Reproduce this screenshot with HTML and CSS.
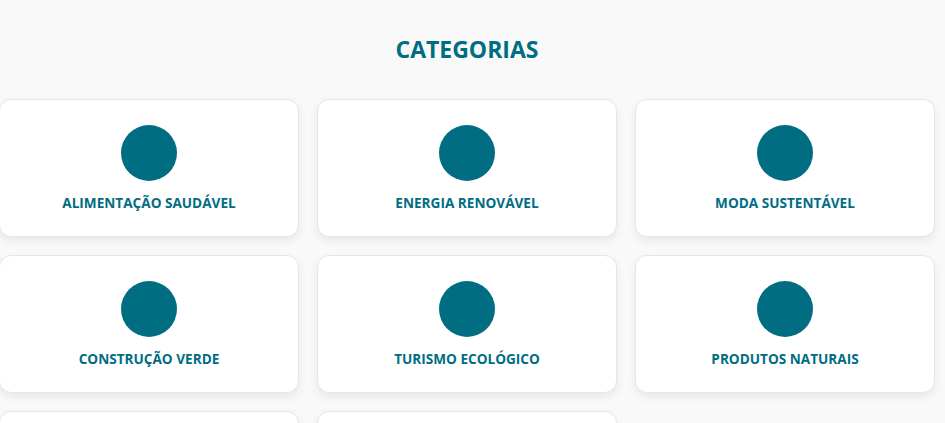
FILE: index.html
```html
<!DOCTYPE html>
<html lang="pt">
<head>
<meta charset="utf-8">
<title>Categorias</title>
<link rel="stylesheet" href="styles.css">
</head>
<body>
<section class="categories">
  <h2 class="categories-title">CATEGORIAS</h2>
  <div class="categories-grid">
    <a class="category-card" href="#"><span class="category-icon"></span><span class="category-name">ALIMENTAÇÃO SAUDÁVEL</span></a>
    <a class="category-card" href="#"><span class="category-icon"></span><span class="category-name">ENERGIA RENOVÁVEL</span></a>
    <a class="category-card" href="#"><span class="category-icon"></span><span class="category-name">MODA SUSTENTÁVEL</span></a>
    <a class="category-card" href="#"><span class="category-icon"></span><span class="category-name">CONSTRUÇÃO VERDE</span></a>
    <a class="category-card" href="#"><span class="category-icon"></span><span class="category-name">TURISMO ECOLÓGICO</span></a>
    <a class="category-card" href="#"><span class="category-icon"></span><span class="category-name">PRODUTOS NATURAIS</span></a>
    <a class="category-card" href="#"><span class="category-icon"></span><span class="category-name">RECICLAGEM</span></a>
    <a class="category-card" href="#"><span class="category-icon"></span><span class="category-name">MOBILIDADE URBANA</span></a>
  </div>
</section>
</body>
</html>
```
FILE: styles.css
```css
* { box-sizing: border-box; }
html, body { margin: 0; padding: 0; }
body {
  background: #f9f9f9;
  font-family: "Open Sans", "Noto Sans", sans-serif;
  color: #006d82;
}
.categories {
  padding-top: 34px;
  width: 936px;
  margin-left: -1px;
}
.categories-title {
  margin: 0 0 34px;
  text-align: center;
  font-size: 23px;
  font-weight: 700;
  line-height: 31px;
  color: #006d82;
}
.categories-grid {
  display: grid;
  grid-template-columns: repeat(3, 300px);
  gap: 18px;
}
.category-card {
  display: flex;
  flex-direction: column;
  align-items: center;
  height: 138px;
  padding-top: 25px;
  background: #fff;
  border: 1px solid #e6e6e6;
  border-radius: 12px;
  box-shadow: 0 4px 10px rgba(0, 0, 0, 0.07);
  text-decoration: none;
  color: #006d82;
}
.category-icon {
  width: 56px;
  height: 56px;
  border-radius: 50%;
  background: #006d82;
}
.category-name {
  margin-top: 12px;
  font-size: 13.6px;
  font-weight: 700;
  line-height: 19px;
}
```
